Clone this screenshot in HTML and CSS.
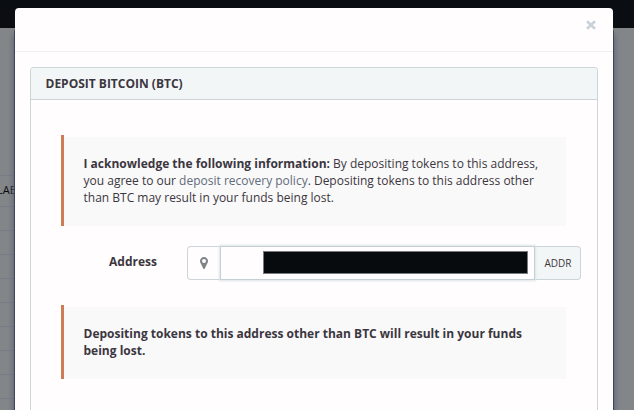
FILE: index.html
```html
<!DOCTYPE html>
<html lang="en">
<head>
<meta charset="utf-8">
<title>Deposit Bitcoin (BTC)</title>
<link rel="stylesheet" href="styles.css">
</head>
<body>
<div class="backdrop">
  <div class="navbar"></div>
  <div class="table-edge"><div class="table-head">LAB</div><div class="table-rows"></div></div>
</div>
<main class="modal">
  <header class="modal-header">
    <button class="close" aria-label="Close"><svg width="10" height="10" viewBox="0 0 10 10"><path d="M1 1.200 9 8.800M9 1.200 1 8.800"/></svg></button>
  </header>
  <section class="panel">
    <h1 class="panel-heading">DEPOSIT BITCOIN (BTC)</h1>
    <div class="panel-body">
      <div class="callout"><p class="callout-text"><strong>I acknowledge the following information:</strong> By depositing tokens to this address,<br>you agree to our <a class="link">deposit recovery policy</a>. Depositing tokens to this address other<br>than BTC may result in your funds being lost.</p></div>
      <div class="form-row">
        <label class="label">Address</label>
        <div class="input-group">
          <span class="addon addon-icon"><svg width="8" height="12" viewBox="0 0 8 12"><path fill-rule="evenodd" d="M4 0C1.8 0 0 1.8 0 4c0 1.2.4 1.7.8 2.5L3.2 11.4c.3.7 1.3.7 1.6 0L7.2 6.5C7.6 5.7 8 5.200 8 4 8 1.800 6.200 0 4 0Zm0 2a2 2 0 1 1 0 4 2 2 0 0 1 0-4Z"/></svg></span>
          <div class="field"><div class="redacted"></div></div>
          <span class="addon addon-button">ADDR</span>
        </div>
      </div>
      <div class="callout"><p class="callout-text"><strong>Depositing tokens to this address other than BTC will result in your funds<br>being lost.</strong></p></div>
    </div>
  </section>
</main>
</body>
</html>
```
FILE: styles.css
```css
* { box-sizing: border-box; }
html, body { height: 100%; }
body {
  margin: 0;
  overflow: hidden;
  display: flow-root;
  background: #828688;
  color: #3c363f;
  font: 12px/17px "Open Sans", sans-serif;
}
.backdrop { position: absolute; inset: 0; }
.navbar { height: 28px; background: #0a0d11; }
.table-edge { width: 20px; padding-top: 147px; overflow: hidden; }
.table-head {
  height: 32px;
  border-top: 1px solid #777d86;
  border-bottom: 1px solid #777d86;
  margin-left: -3px;
  color: #08080c;
  font-size: 11px;
  line-height: 27px;
}
.table-rows {
  height: 203px;
  background: repeating-linear-gradient(#828688 0 23px, #777d86 23px 24px);
}
.modal {
  position: relative;
  display: flex;
  flex-direction: column;
  width: 598px;
  height: 402px;
  margin: 8px 0 0 15px;
  background: #fffdfe;
  border-radius: 4px 4px 0 0;
  box-shadow: 0 20px 0 1px #424354, 0 26px 5px 2px #5d667b;
}
.modal-header {
  flex: none;
  height: 44px;
  border-bottom: 1px solid #efeff0;
  display: flex;
  justify-content: flex-end;
  padding: 12px 17px 0 0;
}
.close { width: 10px; height: 10px; padding: 0; border: 0; background: none; display: flex; }
.close path { stroke: #c9d2d8; stroke-width: 2.6; fill: none; }
.panel {
  flex: 1;
  margin: 15px 15px 0;
  border: 1px solid #ccd5d8;
  border-bottom: 0;
  border-radius: 4px 4px 0 0;
}
.panel-heading {
  height: 32px;
  margin: 0;
  padding: 0 14.5px;
  border-bottom: 1px solid #ccd5d8;
  border-radius: 3px 3px 0 0;
  background: #f3f6f6;
  font-size: 12px;
  line-height: 31px;
  font-weight: 700;
}
.panel-body { padding: 35px 31px 0 30px; }
.callout {
  border-left: 3px solid #cc7d55;
  padding-top: 2px;
}
.callout-text { margin: 0; padding: 18px 19px 20px 19.5px; background: #f9f9f9; white-space: nowrap; }
.link { color: #626b7c; }
.form-row { display: flex; height: 34px; margin: 20px 0 25px; }
.label { width: 126px; padding: 7px 30px 0 0; text-align: right; font-weight: 700; }
.input-group { display: flex; width: 394px; margin-right: -15px; }
.addon {
  display: flex;
  align-items: center;
  justify-content: center;
  border: 1px solid #ccd5d8;
}
.addon-icon { width: 33px; border-right: 0; border-radius: 4px 0 0 4px; }
.addon-icon path { fill: #808487; }
.addon-button { width: 46px; padding-left: 1px; border-left: 0; border-radius: 0 4px 4px 0; background: #f3f6f6; font-size: 10px; }
.field {
  flex: 1;
  padding: 4px 6px 0 42px;
  border: 1px solid #c5d0d5;
  background: #fffdfe;
  box-shadow: 0 0 2px 1px #dce5e8;
  z-index: 1;
}
.redacted { height: 23px; background: #070b0e; border: 1px solid #777a7e; }
```
